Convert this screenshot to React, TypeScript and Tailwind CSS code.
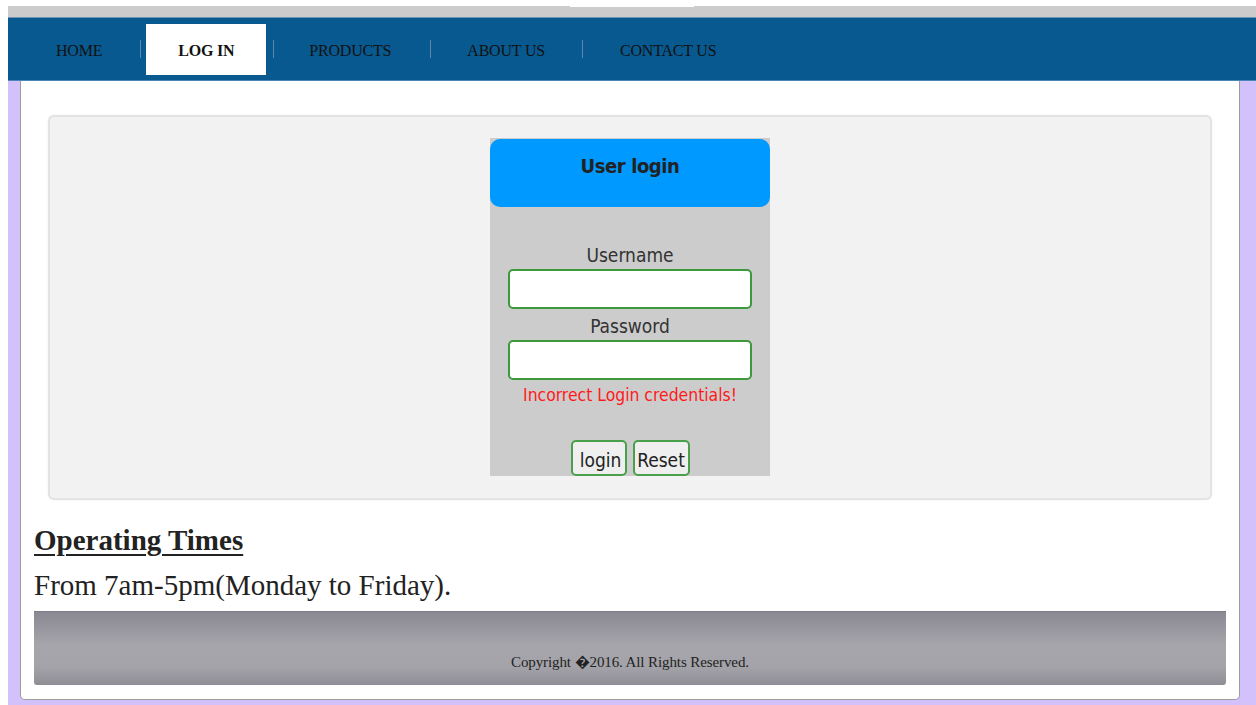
import { useState } from 'react';

const navLinks = [
  { label: 'HOME', cls: 'pl-[48px] pr-[38px]' },
  { label: 'LOG IN', active: true },
  { label: 'PRODUCTS', cls: 'pl-[35px] pr-[39px]' },
  { label: 'ABOUT US', cls: 'pl-[36px] pr-[37px]' },
  { label: 'CONTACT US', cls: 'pl-[37px]' },
];

function Divider() {
  return <span className="w-px h-[18px] bg-[#5f86a6]" />;
}

function TopNav() {
  return (
    <nav className="h-[64px] bg-[#08598f] border-t border-[#6f95b3] border-b border-b-[#4a86b5] flex items-center font-['Liberation_Serif',serif] text-[16px] tracking-[-0.2px] text-[#111]">
      {navLinks.map((link, i) => (
        <div key={link.label} className="flex items-center">
          {i > 0 && !link.active && !navLinks[i - 1].active && <Divider />}
          {link.active ? (
            <div className="flex items-center">
              <Divider />
              <a
                href="#"
                className="ml-[5px] mr-[7px] w-[120px] h-[51px] pt-[3px] bg-white flex items-center justify-center font-bold"
              >
                {link.label}
              </a>
              <Divider />
            </div>
          ) : (
            <a href="#" className={`pt-[3px] ${link.cls}`}>
              {link.label}
            </a>
          )}
        </div>
      ))}
    </nav>
  );
}

function LoginBox() {
  const [user, setUser] = useState('');
  const [pass, setPass] = useState('');

  return (
    <div className="w-[280px] mx-auto bg-[#cccccc] pt-px flex flex-col items-center font-['DejaVu_Sans_Condensed','DejaVu_Sans',sans-serif] text-[#333]">
      <div className="w-full h-[68px] rounded-[10px] bg-[#0099ff] pt-[13px] text-center">
        <h3 className="text-[20px] leading-[28px] font-bold tracking-[-0.4px] text-[#222]">User login</h3>
      </div>
      <label className="mt-[36px] text-[19px] leading-[24px]">Username</label>
      <input
        value={user}
        onChange={(e) => setUser(e.target.value)}
        className="mt-[2px] w-[244px] h-[40px] bg-white border-2 border-[#3c9a3c] rounded-[5px] outline-none px-2"
      />
      <label className="mt-[5px] text-[19px] leading-[24px]">Password</label>
      <input
        type="password"
        value={pass}
        onChange={(e) => setPass(e.target.value)}
        className="mt-[2px] w-[244px] h-[40px] bg-white border-2 border-[#3c9a3c] rounded-[5px] outline-none px-2"
      />
      <p className="mt-[5px] text-[17.4px] leading-[20px] text-[#ff1a1a]">Incorrect Login credentials!</p>
      <div className="mt-[35px] flex gap-[6px]">
        <button className="w-[56px] h-[36px] pl-[4px] pt-[5px] bg-[#efefef] border-2 border-[#4aa04a] rounded-[5px] text-[19px] leading-none text-[#222]">
          login
        </button>
        <button
          type="reset"
          onClick={() => {
            setUser('');
            setPass('');
          }}
          className="w-[57px] h-[36px] pt-[5px] bg-[#efefef] border-2 border-[#4aa04a] rounded-[5px] text-[19px] leading-none text-[#222]"
        >
          Reset
        </button>
      </div>
    </div>
  );
}

export default function App() {
  return (
    <div className="min-h-[705px] bg-white pl-[8px] pt-[6px] flex flex-col">
      {/* thin header strip */}
      <div className="h-[11px] bg-[#cccccc] flex justify-center">
        <div className="w-[124px] h-px bg-white" />
      </div>
      <TopNav />
      <div className="flex-1 bg-[#d3c1fc] pl-[12px] pr-[16px] pb-[5px]">
        <div className="bg-white border-x border-b border-[#9c9c9c] rounded-b-[5px] px-[13px] pt-[34px] pb-[14px]">
          <div className="mx-[14px] bg-[#f2f2f2] border-2 border-[#e3e3e3] rounded-[6px] pt-[21px] pb-[22px] shadow-[0_0_2px_rgba(0,0,0,0.08)]">
            <LoginBox />
          </div>
          <div className="font-['Liberation_Serif',serif] text-[#222]">
            <h2 className="mt-[22px] text-[29px] leading-[36px] font-bold underline decoration-2 underline-offset-[4px]">
              Operating Times
            </h2>
            <p className="mt-[8px] text-[29px] leading-[38px]">From 7am-5pm(Monday to Friday).</p>
          </div>
          <footer className="mt-[7px] h-[74px] rounded-b-[3px] bg-[linear-gradient(to_bottom,#8a8993_0%,#a6a5ab_45%,#a4a3a9_75%,#8f8e96_100%)] border-t border-[#7e7e86] flex items-end justify-center pb-[14px]">
            <p className="font-['Liberation_Serif',serif] text-[15px] leading-[18px] tracking-[-0.1px] text-[#222]">
              Copyright {'\uFFFD'}2016. All Rights Reserved.
            </p>
          </footer>
        </div>
      </div>
    </div>
  );
}
